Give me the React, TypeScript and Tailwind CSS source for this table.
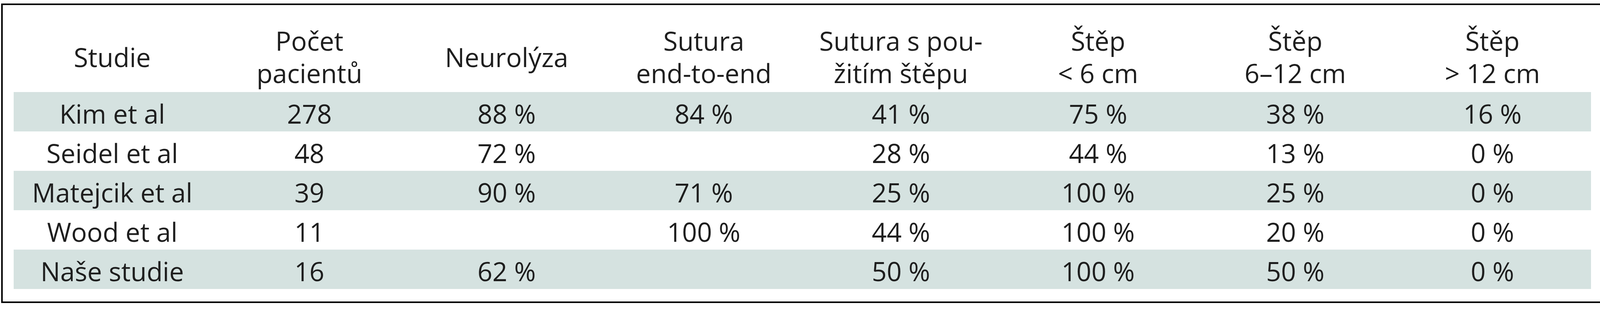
import React from 'react'

const headers: string[][] = [
  ['Studie'],
  ['Počet', 'pacientů'],
  ['Neurolýza'],
  ['Sutura', 'end-to-end'],
  ['Sutura s pou-', 'žitím štěpu'],
  ['Štěp', '< 6 cm'],
  ['Štěp', '6–12 cm'],
  ['Štěp', '> 12 cm'],
]

const rows: string[][] = [
  ['Kim et al', '278', '88 %', '84 %', '41 %', '75 %', '38 %', '16 %'],
  ['Seidel et al', '48', '72 %', '', '28 %', '44 %', '13 %', '0 %'],
  ['Matejcik et al', '39', '90 %', '71 %', '25 %', '100 %', '25 %', '0 %'],
  ['Wood et al', '11', '', '100 %', '44 %', '100 %', '20 %', '0 %'],
  ['Naše studie', '16', '62 %', '', '50 %', '100 %', '50 %', '0 %'],
]

export default function App() {
  return (
    <div className="w-[4130px] h-[800px] bg-white pl-[3px] pt-[9px]" style={{ fontFamily: '"Open Sans", sans-serif' }}>
      {/* Framed table */}
      <div className="w-[4113px] h-[768px] border-4 border-black pl-[28px] pr-[39px] text-[67px] text-[#1e1e1e]">
        {/* Header */}
        <div className="grid grid-cols-8 h-[223px] pt-[43px] items-center">
          {headers.map((lines, i) => (
            <div key={i} className="text-center leading-[83px]">
              {lines.map((l, j) => (
                <div key={j} className="whitespace-nowrap">{l}</div>
              ))}
            </div>
          ))}
        </div>

        {/* Body */}
        {rows.map((row, r) => (
          <div
            key={r}
            className={`grid grid-cols-8 h-[101px] pt-[8px] items-center ${r % 2 === 0 ? 'bg-[#d5e2e0]' : 'bg-white'}`}
          >
            {row.map((cell, c) => (
              <div key={c} className="text-center whitespace-nowrap leading-[90px]">{cell}</div>
            ))}
          </div>
        ))}
      </div>
    </div>
  )
}
